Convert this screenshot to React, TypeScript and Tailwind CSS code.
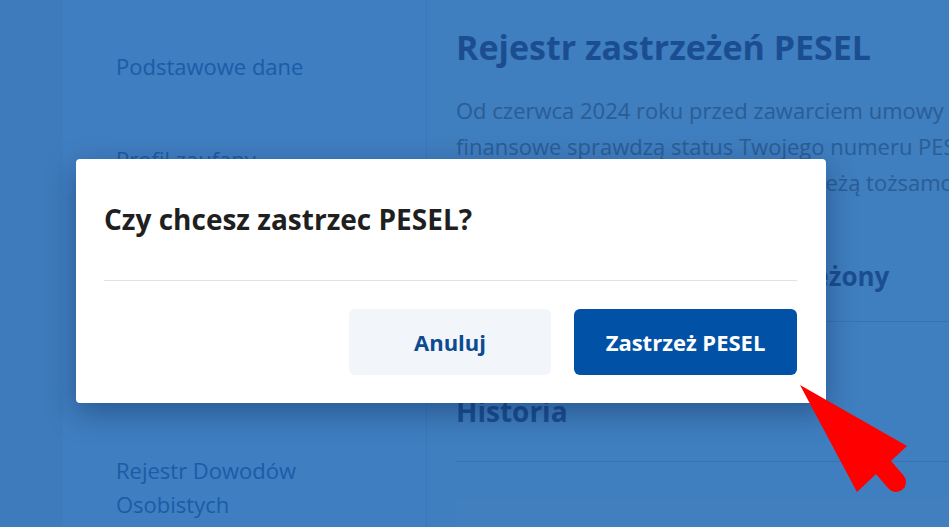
export default function App() {
  const font = { fontFamily: '"Open Sans", "Noto Sans", sans-serif' };
  return (
    <div
      className="relative w-[949px] h-[527px] overflow-hidden bg-[#3d7bbc]"
      style={font}
    >
      <div className="flex h-full pl-[63px]">
        {/* sidebar */}
        <aside className="w-[364px] h-full bg-[#3f7ec0] border-r border-[#3a77b8] pl-[53px] pt-[49px] text-[22px] leading-[34px] text-[#1d5ba7]">
          <p>Podstawowe dane</p>
          <p className="mt-[59px]">Profil zaufany</p>
          <p className="mt-[69px]">Moje dokumenty</p>
          <p className="mt-[69px]">Rejestr zastrzeżeń PESEL</p>
          <p className="mt-[71px]">
            Rejestr Dowodów
            <br />
            Osobistych
          </p>
        </aside>

        {/* main */}
        <main className="flex-1 min-w-0 h-full bg-[#3f7ebf] pl-[29px] pt-[25px] overflow-hidden">
          <h1 className="text-[34px] leading-[44px] font-bold text-[#1b4e90] whitespace-nowrap">
            Rejestr zastrzeżeń PESEL
          </h1>
          <p className="mt-[23px] text-[22px] leading-[36px] text-[#2a5d95] whitespace-nowrap">
            Od czerwca 2024 roku przed zawarciem umowy
            <br />
            finansowe sprawdzą status Twojego numeru PESEL.
            <br />
            Zastrzeżenie chroni Cię przed kradzieżą tożsamości.
          </p>
          <div className="mt-[58px] pb-[27px] border-b border-[#3773b3]">
            <h2 className="text-[26px] leading-[36px] font-bold text-[#1b4e90] whitespace-nowrap">
              Numer PESEL nie jest zastrzeżony
            </h2>
          </div>
          <div className="mt-[70px] pb-[31px] border-b border-[#3773b3]">
            <h2 className="text-[28px] leading-[38px] font-bold text-[#1b4e90]">
              Historia
            </h2>
          </div>
          <div className="mt-[36px] h-[60px] rounded-tl-lg bg-[#417fbf]" />
        </main>
      </div>

      {/* modal */}
      <div className="absolute left-[76px] top-[159px] w-[750px] h-[244px] bg-white rounded-[4px] shadow-[0_10px_30px_rgba(0,20,60,0.35)] pl-[28px] pr-[29px] pt-[42px]">
        <h3 className="text-[28px] leading-[36px] font-bold text-[#1f1f1f]">
          Czy chcesz zastrzec PESEL?
        </h3>
        <div className="mt-[43px] border-t border-[#dfe1e4]" />
        <div className="mt-[28px] flex justify-end gap-[23px]">
          <button className="w-[202px] h-[66px] rounded-[6px] bg-[#f2f5f9] text-[22px] font-bold text-[#0c4b91]">
            Anuluj
          </button>
          <button className="w-[223px] h-[66px] rounded-[6px] bg-[#0152a6] text-[22px] font-bold text-white">
            Zastrzeż PESEL
          </button>
        </div>
      </div>

      {/* red pointer annotation */}
      <svg
        className="absolute left-[795px] top-[378px]"
        width="130"
        height="130"
        viewBox="0 0 130 130"
      >
        <polygon points="5,7 112,68 97,82 80,97 62,114" fill="#ff0000" />
        <line
          x1="88"
          y1="89"
          x2="101"
          y2="104"
          stroke="#ff0000"
          strokeWidth="20"
          strokeLinecap="round"
        />
      </svg>
    </div>
  );
}
